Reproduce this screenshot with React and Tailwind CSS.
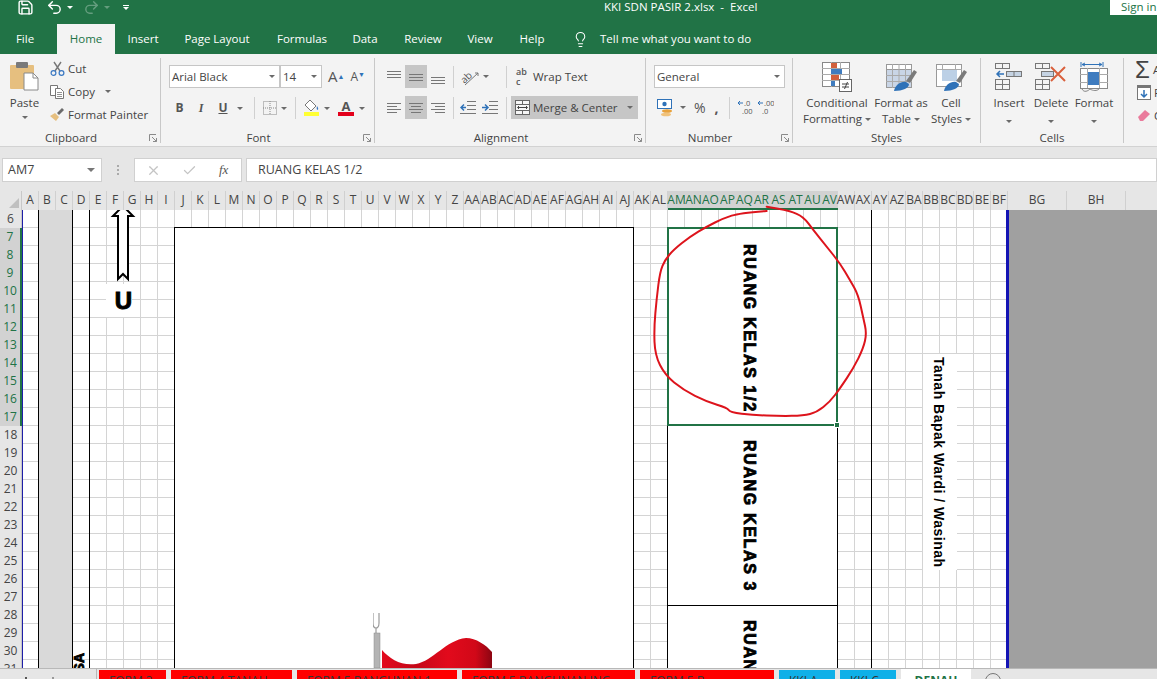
import { Save, Undo2, Redo2, Lightbulb, X, Check } from 'lucide-react';

const COLS = Array.from({ length: 58 }, (_, i) => (i < 26 ? String.fromCharCode(65 + i) : (i < 52 ? 'A' + String.fromCharCode(65 + i - 26) : 'B' + String.fromCharCode(65 + i - 52))));
const ROWS = Array.from({ length: 26 }, (_, i) => i + 6);

function Caret({ className = '' }) {
  return <span className={`inline-block w-0 h-0 border-x-[3px] border-t-[3px] border-x-transparent border-t-[#6a6a6a] ${className}`} />;
}

function VDivider({ className = '' }) {
  return <div className={`w-px h-[22px] bg-[#d0d0d0] ${className}`} />;
}

function Launcher() {
  return (
    <svg width="8" height="8" viewBox="0 0 8 8" className="absolute right-[3px] bottom-[1px]">
      <path d="M0.5 7V0.5H7M7.5 7.5L3 3M7.5 4V7.5H4" fill="none" stroke="#8a8a8a" strokeWidth="1" />
    </svg>
  );
}

function Group({ width, label, launcher, children }) {
  return (
    <div className={`relative shrink-0 h-[85px] border-r border-[#c8c8c8] flex flex-col ${width}`}>
      <div className="h-[72px] shrink-0">{children}</div>
      <div className={`text-center text-[11.5px] leading-[16px] text-[#444] ${launcher ? 'pr-[18px]' : ''}`}>{label}</div>
      {launcher && <Launcher />}
    </div>
  );
}

// align icons are just sets of grey lines
function Lines({ rows }) {
  return (
    <svg width="16" height="16" viewBox="0 0 16 16">
      {rows.map(([x1, x2, y], i) => <line key={i} x1={x1} x2={x2} y1={y + 0.5} y2={y + 0.5} stroke="#777" />)}
    </svg>
  );
}

function AlignSlot({ rows, on }) {
  return (
    <div className={`w-[22px] h-[23px] flex items-center justify-center ${on ? 'bg-[#c6c6c6]' : ''}`}>
      <Lines rows={rows} />
    </div>
  );
}

function Select({ width, text }) {
  return (
    <div className={`h-[23px] bg-white border border-[#c6c6c6] flex items-center justify-between pl-[2px] pr-[4px] text-[11.5px] text-[#444] ${width}`}>
      <span>{text}</span>
      <Caret />
    </div>
  );
}

function PasteIcon() {
  return (
    <svg width="31" height="30" viewBox="0 0 31 30">
      <rect x="1" y="4" width="24" height="24" rx="1" fill="#e6bf7f" />
      <rect x="7" y="1" width="12" height="6" rx="1" fill="#7a7a7a" />
      <path d="M15 12h9l5 5v12H15z" fill="#fff" stroke="#8a8a8a" />
      <path d="M24 12v5h5" fill="none" stroke="#8a8a8a" />
    </svg>
  );
}

function CutIcon() {
  return (
    <svg width="15" height="15" viewBox="0 0 15 15" fill="none">
      <path d="M4 1l6 9M11 1l-6 9" stroke="#777" strokeWidth="1.4" />
      <circle cx="3.5" cy="12" r="2.4" stroke="#3a78c2" strokeWidth="1.2" />
      <circle cx="11.5" cy="12" r="2.4" stroke="#3a78c2" strokeWidth="1.2" />
    </svg>
  );
}

function CopyIcon() {
  return (
    <svg width="15" height="15" viewBox="0 0 15 15" fill="#fff" stroke="#777">
      <path d="M0.5 1.5h7v10h-7z" />
      <path d="M5.5 4.5h5l3 3v7h-8z" />
      <path d="M7 8.5h5M7 10.5h5M7 12.5h5" strokeWidth="0.8" />
    </svg>
  );
}

function BrushIcon() {
  return (
    <svg width="16" height="15" viewBox="0 0 16 15">
      <path d="M1 9l5-3 4 4-3 4c-2-2-4-3-6-5z" fill="#e6bf7f" />
      <path d="M8 6l5-5 2 2-5 5z" fill="#6b6b6b" />
    </svg>
  );
}

function FillIcon() {
  return (
    <svg width="17" height="18" viewBox="0 0 17 18">
      <path d="M7 1l6 6-5 5-6-6z" fill="#fff" stroke="#777" />
      <path d="M14 7c1 1.5 1.5 2.5 1 3.500s-2 0-1-3.500z" fill="#3a78c2" />
      <rect x="1" y="13" width="15" height="4" fill="#ffff33" />
    </svg>
  );
}

function BorderIcon() {
  return (
    <svg width="14" height="14" viewBox="0 0 14 14" fill="none" stroke="#888" strokeDasharray="1 1">
      <rect x="0.5" y="0.5" width="13" height="13" />
      <path d="M7 0v14M0 7h14" />
    </svg>
  );
}

function OrientIcon() {
  return (
    <svg width="20" height="18" viewBox="0 0 20 18">
      <text x="0" y="13" fontSize="10" fill="#555" fontFamily="Open Sans, sans-serif" transform="rotate(-45 6 9)">ab</text>
      <path d="M5 17L18 5M15 5h3v3" fill="none" stroke="#777" />
    </svg>
  );
}

function IndentIcon({ flip }) {
  return (
    <svg width="16" height="13" viewBox="0 0 16 13">
      <path d="M7 .5h9M7 4.500h9M7 8.500h9M0 12.500h16" stroke="#777" fill="none" />
      <path d={flip ? 'M0 6.500h5M3 3.500l3 3-3 3' : 'M6 6.500H1M4 3.500l-3 3 3 3'} stroke="#2f72b8" strokeWidth="1.5" fill="none" />
    </svg>
  );
}

function MergeIcon() {
  return (
    <svg width="15" height="15" viewBox="0 0 15 15" fill="#f6f6f6" stroke="#666">
      <rect x="0.5" y="0.5" width="14" height="14" />
      <path d="M0 4.500h15M0 10.500h15M7.500 0v4M7.500 11v4" />
      <path d="M3 7.500h9M4 6L2.500 7.500 4 9M11 6l1.500 1.500L11 9" stroke="#444" fill="none" />
    </svg>
  );
}

function CurrencyIcon() {
  return (
    <svg width="17" height="18" viewBox="0 0 17 18">
      <rect x="0.5" y="0.5" width="14" height="9" fill="#fff" stroke="#2f72b8" />
      <circle cx="7.500" cy="5" r="2.200" fill="#2f72b8" />
      <ellipse cx="10" cy="12" rx="5" ry="1.800" fill="#e8a23c" />
      <ellipse cx="9" cy="15.500" rx="5" ry="1.800" fill="#f1c27a" />
    </svg>
  );
}

function DecimalIcon({ inc }) {
  return (
    <svg width="17" height="17" viewBox="0 0 17 17" fontFamily="Open Sans, sans-serif" fontSize="7.500" fill="#555">
      <text x="7" y="7">{inc ? '.0' : '.00'}</text>
      <text x="5" y="15">{inc ? '.00' : '.0'}</text>
      <path d="M6 4H1M3 2L1 4l2 2" fill="none" stroke="#2f72b8" />
    </svg>
  );
}

function CondIcon() {
  return (
    <svg width="30" height="30" viewBox="0 0 30 30">
      <rect x="0.5" y="0.5" width="27" height="24" fill="#fff" stroke="#888" />
      <path d="M9.500 0v25M18.500 0v25M0 6.500h28M0 12.500h28M0 18.500h28" stroke="#aaa" />
      <rect x="9" y="1" width="6" height="5" fill="#d2603c" />
      <rect x="9" y="7" width="11" height="5" fill="#3f7cbf" />
      <rect x="9" y="13" width="8" height="5" fill="#d2603c" />
      <rect x="9" y="19" width="4" height="5" fill="#3f7cbf" />
      <rect x="17.500" y="17.500" width="12" height="12" fill="#fff" stroke="#666" />
      <path d="M20 22h7M20 25h7M25.500 20l-3 7" stroke="#444" fill="none" />
    </svg>
  );
}

function TableIcon() {
  return (
    <svg width="31" height="30" viewBox="0 0 31 30">
      <rect x="0.5" y="2.500" width="25" height="23" fill="#c9d5e6" stroke="#999" />
      <rect x="0.500" y="2.500" width="25" height="5" fill="#fff" stroke="#999" />
      <path d="M6.500 2v24M13 2v24M19.500 2v24M0 13.500h26M0 19.500h26" stroke="#aaa" />
      <path d="M20 19L28 8l3 2-7 11z" fill="#7a7a7a" />
      <path d="M8 29c1-6 7-10 12-9l3 2c0 4-6 7-15 7z" fill="#2f72b8" />
    </svg>
  );
}

function CellStyleIcon() {
  return (
    <svg width="31" height="30" viewBox="0 0 31 30">
      <rect x="0.5" y="2.500" width="25" height="22" fill="#fff" stroke="#999" />
      <rect x="6" y="8" width="15" height="11" fill="#bcd0e6" />
      <path d="M6.500 2v6M19.500 2v6M0 7.500h26" stroke="#aaa" />
      <path d="M20 19L28 8l3 2-7 11z" fill="#7a7a7a" />
      <path d="M8 29c1-6 7-10 12-9l3 2c0 4-6 7-15 7z" fill="#2f72b8" />
    </svg>
  );
}

function InsertIcon() {
  return (
    <svg width="28" height="28" viewBox="0 0 28 28" fill="none" stroke="#777">
      <rect x="0.500" y="1.500" width="14" height="5" />
      <path d="M7.500 1v5" />
      <rect x="0.500" y="17.500" width="14" height="10" />
      <path d="M7.500 17v10M0 22.500h14" />
      <rect x="11.500" y="9.500" width="15" height="5" fill="#c5d3e3" />
      <path d="M19 9v6" />
      <path d="M9 12H2M5 9l-3 3 3 3" stroke="#2f72b8" strokeWidth="1.500" />
    </svg>
  );
}

function DeleteIcon() {
  return (
    <svg width="32" height="28" viewBox="0 0 32 28" fill="none" stroke="#777">
      <rect x="0.500" y="1.500" width="14" height="5" />
      <path d="M7.500 1v5" />
      <rect x="0.500" y="17.500" width="14" height="10" />
      <path d="M7.500 17v10M0 22.500h14" />
      <rect x="6.500" y="9.500" width="12" height="5" fill="#c5d3e3" />
      <path d="M16 5l14 14M30 5L16 19" stroke="#d9603c" strokeWidth="2" />
    </svg>
  );
}

function FormatIcon() {
  return (
    <svg width="28" height="31" viewBox="0 0 28 31" fill="none" stroke="#888">
      <path d="M1 0v5M23 0v5M2 2.500h20M5 1L2 2.500 5 4M19 1l3 1.500L19 4" stroke="#2f72b8" />
      <rect x="0.500" y="6.500" width="27" height="20" fill="#fff" />
      <path d="M7.500 6v20M19.500 6v20M0 12.500h28M0 20.500h28" stroke="#aaa" />
      <rect x="8" y="10" width="11" height="13" fill="#3f7cbf" stroke="none" />
      <path d="M2 27c2 4 6 2 8 0 3 2 7 2 9 0" />
    </svg>
  );
}

function LargeButton({ width, icon, lines }) {
  return (
    <div className={`shrink-0 flex flex-col items-center ${width}`}>
      <div className="h-[33px] mt-[4px] flex items-start justify-center">{icon}</div>
      <div className="text-[11.5px] leading-[16px] text-[#444] text-center whitespace-nowrap">
        {lines.map((l, i) => <div key={i}>{l}</div>)}
      </div>
    </div>
  );
}

function Ribbon() {
  return (
    <div className="h-[93px] shrink-0 bg-[#f3f3f3] border-b border-[#d2d2d2] pt-[4px] flex overflow-hidden">
      <Group width="w-[161px]" label="Clipboard" launcher>
        <div className="flex">
          <div className="w-[49px] flex flex-col items-center">
            <div className="mt-[3px] h-[34px]"><PasteIcon /></div>
            <span className="text-[11.5px] leading-[16px] text-[#444]">Paste</span>
            <Caret className="mt-[5px]" />
          </div>
          <div className="flex flex-col -mt-px text-[11.5px] text-[#444]">
            {[[<CutIcon />, 'Cut'], [<CopyIcon />, 'Copy'], [<BrushIcon />, 'Format Painter']].map(([icon, t], i) => (
              <div key={t} className="h-[23px] flex items-center gap-[3px] whitespace-nowrap">
                <span className="w-[16px] flex justify-center">{icon}</span>
                {t}
                {i === 1 && <Caret className="ml-[7px]" />}
              </div>
            ))}
          </div>
        </div>
      </Group>

      <Group width="w-[214px]" label="Font" launcher>
        <div className="pl-[8px] pt-[7px]">
          <div className="flex items-center">
            <Select width="w-[111px]" text="Arial Black" />
            <Select width="w-[42px]" text="14" />
            <span className="ml-[6px] text-[15px] leading-none text-[#555]">A<sup className="text-[7px] text-[#2f72b8]">▲</sup></span>
            <span className="ml-[6px] text-[12px] leading-none text-[#555]">A<sup className="text-[7px] text-[#2f72b8]">▼</sup></span>
          </div>
          <div className="flex items-center h-[20px] mt-[10px] text-[12px] text-[#555]">
            <span className="w-[21px] text-center font-bold">B</span>
            <span className="w-[22px] text-center italic font-['Liberation_Serif',serif] font-bold">I</span>
            <span className="w-[22px] text-center font-bold underline">U</span>
            <Caret className="ml-[3px]" />
            <VDivider className="ml-[11px]" />
            <span className="ml-[7px] w-[16px] flex justify-center"><BorderIcon /></span>
            <Caret className="ml-[3px]" />
            <VDivider className="ml-[8px]" />
            <span className="ml-[6px] w-[18px] flex justify-center"><FillIcon /></span>
            <Caret className="ml-[4px]" />
            <span className="ml-[7px] w-[18px] flex flex-col items-center font-bold leading-[12px] text-[13px]">
              A
              <span className="block w-[16px] h-[4px] bg-[#e3001b]" />
            </span>
            <Caret className="ml-[4px]" />
          </div>
        </div>
      </Group>

      <Group width="w-[271px]" label="Alignment" launcher>
        <div className="pl-[8px] pt-[7px]">
          <div className="flex items-center">
            <AlignSlot rows={[[1, 15, 2], [1, 15, 5], [1, 15, 8]]} />
            <AlignSlot on rows={[[1, 15, 5], [1, 15, 8], [1, 15, 11]]} />
            <AlignSlot rows={[[1, 15, 8], [1, 15, 11], [1, 15, 14]]} />
            <VDivider className="ml-[4px]" />
            <div className="ml-[6px] w-[46px] flex items-center gap-[3px]"><OrientIcon /><Caret /></div>
            <VDivider />
            <div className="ml-[4px] w-[127px] h-[23px] flex items-center text-[11.5px] text-[#444]">
              <span className="w-[22px] pl-[5px] leading-[10px] text-[9px] font-semibold text-[#555]">ab<br />c</span>
              Wrap Text
            </div>
          </div>
          <div className="flex items-center mt-[8px]">
            <AlignSlot rows={[[1, 15, 3], [1, 11, 6], [1, 15, 9], [1, 11, 12]]} />
            <AlignSlot on rows={[[1, 15, 3], [3, 13, 6], [1, 15, 9], [3, 13, 12]]} />
            <AlignSlot rows={[[1, 15, 3], [5, 15, 6], [1, 15, 9], [5, 15, 12]]} />
            <VDivider className="ml-[4px]" />
            <div className="ml-[6px] w-[46px] flex items-center gap-[6px]"><IndentIcon /><IndentIcon flip /></div>
            <VDivider />
            <div className="ml-[4px] w-[127px] h-[23px] bg-[#c6c6c6] flex items-center text-[11.5px] text-[#444] pl-[4px]">
              <MergeIcon />
              <span className="ml-[3px]">Merge &amp; Center</span>
              <Caret className="ml-auto mr-[5px]" />
            </div>
          </div>
        </div>
      </Group>

      <Group width="w-[147px]" label="Number" launcher>
        <div className="pl-[8px] pt-[7px]">
          <Select width="w-[131px]" text="General" />
          <div className="flex items-center h-[23px] mt-[8px] pl-[3px] text-[#555]">
            <CurrencyIcon />
            <Caret className="ml-[6px]" />
            <span className="ml-[8px] text-[14px]">%</span>
            <span className="ml-[9px] text-[14px] font-bold leading-none">,</span>
            <VDivider className="ml-[10px]" />
            <span className="ml-[7px]"><DecimalIcon inc /></span>
            <span className="ml-[3px]"><DecimalIcon /></span>
          </div>
        </div>
      </Group>

      <Group width="w-[188px]" label="Styles">
        <div className="flex pl-[11px]">
          <LargeButton width="w-[66px]" icon={<CondIcon />} lines={['Conditional', <>Formatting <Caret className="mb-[2px]" /></>]} />
          <LargeButton width="w-[62px]" icon={<TableIcon />} lines={['Format as', <>Table <Caret className="mb-[2px]" /></>]} />
          <LargeButton width="w-[38px]" icon={<CellStyleIcon />} lines={['Cell', <>Styles <Caret className="mb-[2px]" /></>]} />
        </div>
      </Group>

      <Group width="w-[143px]" label="Cells">
        <div className="flex pl-[6px]">
          <LargeButton width="w-[44px]" icon={<InsertIcon />} lines={['Insert', <Caret />]} />
          <LargeButton width="w-[40px]" icon={<DeleteIcon />} lines={['Delete', <Caret />]} />
          <LargeButton width="w-[46px]" icon={<FormatIcon />} lines={['Format', <Caret />]} />
        </div>
      </Group>

      {/* Editing group runs off the right edge */}
      <div className="pl-[11px] flex flex-col text-[11.5px] text-[#444] whitespace-nowrap">
        <div className="h-[23px] flex items-center gap-[2px]"><span className="text-[24px] leading-none w-[16px] font-['Liberation_Sans',sans-serif]">Σ</span>AutoSum</div>
        <div className="h-[23px] flex items-center gap-[3px] pl-[2px]">
          <svg width="14" height="15" viewBox="0 0 14 15"><rect x="0.500" y="0.500" width="13" height="14" fill="#fff" stroke="#777" /><rect x="0" y="0" width="14" height="3" fill="#777" /><path d="M7 5v7M4 9l3 3 3-3" fill="none" stroke="#2f72b8" strokeWidth="1.500" /></svg>
          Fill
        </div>
        <div className="h-[23px] flex items-center gap-[3px] pl-[2px]">
          <svg width="14" height="13" viewBox="0 0 14 13"><path d="M1 8l7-7 5 4-7 7H3z" fill="#ea7b9c" /></svg>
          Clear
        </div>
      </div>
    </div>
  );
}

function FormulaBar() {
  return (
    <div className="h-[44px] shrink-0 bg-[#e6e6e6] pt-[11px] pl-[2px] flex items-start">
      <div className="w-[100px] h-[24px] bg-white border border-[#d0d0d0] flex items-center justify-between pl-[5px] pr-[6px] text-[12.5px] text-[#444]">
        AM7
        <span className="w-0 h-0 border-x-[4px] border-t-[4px] border-x-transparent border-t-[#777]" />
      </div>
      <div className="w-[32px] h-[24px] flex flex-col items-center justify-center gap-[2px]">
        <span className="w-[2px] h-[2px] bg-[#aaa]" />
        <span className="w-[2px] h-[2px] bg-[#aaa]" />
        <span className="w-[2px] h-[2px] bg-[#aaa]" />
      </div>
      <div className="w-[108px] h-[24px] bg-white border border-[#d0d0d0] flex items-center pl-[11px] text-[#c4c4c4]">
        <X size={15} />
        <Check size={15} className="ml-[21px]" />
        <span className="ml-[22px] text-[13px] italic text-[#555] font-['Liberation_Serif',serif]">fx</span>
      </div>
      <div className="flex-1 ml-[4px] h-[24px] bg-white border border-[#d0d0d0] flex items-center pl-[11px] text-[12.5px] text-[#444]">
        RUANG KELAS 1/2
      </div>
    </div>
  );
}

function ColumnHeader() {
  return (
    <div className="h-[19px] shrink-0 bg-[#e6e6e6] flex text-[12px] text-[#444]">
      <div className="w-[22px] shrink-0 relative border-r border-[#c8c8c8]">
        <span className="absolute right-[2px] bottom-[2px] w-0 h-0 border-l-[10px] border-b-[10px] border-l-transparent border-b-[#c0c0c0]" />
      </div>
      {COLS.map((c, i) => {
        const on = i >= 38 && i <= 47;
        return (
          <div key={c} className={`w-[17px] shrink-0 flex justify-center whitespace-nowrap leading-[18px] ${on ? 'bg-[#d2d2d2] text-[#217346] border-b-2 border-[#217346]' : 'border-r border-[#d0d0d0]'}`}>
            {c}
          </div>
        );
      })}
      <div className="w-[59px] shrink-0 text-center leading-[18px] border-r border-[#d0d0d0]">BG</div>
      <div className="w-[59px] shrink-0 text-center leading-[18px] border-r border-[#d0d0d0]">BH</div>
      <div className="flex-1" />
    </div>
  );
}

function RowHeader() {
  return (
    <div className="w-[22px] shrink-0 bg-[#e6e6e6] flex flex-col text-[12px]">
      {ROWS.map((r) => {
        const on = r >= 7 && r <= 17;
        return (
          <div key={r} className={`h-[18px] shrink-0 text-center leading-[18px] ${on ? 'bg-[#d2d2d2] text-[#217346] border-r-2 border-[#217346]' : 'text-[#444] border-r border-[#c8c8c8]'}`}>
            {r}
          </div>
        );
      })}
    </div>
  );
}

function Flag() {
  return (
    <svg width="125" height="56" viewBox="0 0 125 56" className="absolute left-[198px] top-[384px]">
      <defs>
        <linearGradient id="flagRed" x1="0" x2="1">
          <stop offset="0" stopColor="#e30a1d" />
          <stop offset="0.3" stopColor="#c40818" />
          <stop offset="0.6" stopColor="#e20a1c" />
          <stop offset="0.85" stopColor="#d10818" />
          <stop offset="1" stopColor="#8c0512" />
        </linearGradient>
      </defs>
      <path d="M0 1v10c0 4 2 5 3 5s3-1 3-5V1M3 16v6" fill="none" stroke="#9a9a9a" strokeWidth="1.200" />
      <rect x="1" y="21" width="6" height="35" fill="#b4b4b4" stroke="#8a8a8a" strokeWidth="0.500" />
      <path d="M9 38c8 9 19 16 34 14 17-3 30-24 50-26 10 0 20 7 26 14v16H9z" fill="url(#flagRed)" />
    </svg>
  );
}

const RED_LINE = [[380, 18], [300, 24], [250, 40], [200, 65], [150, 95], [100, 135], [75, 165], [60, 200], [50, 280], [42, 370], [45, 450], [75, 510], [130, 555], [200, 590], [262, 608], [270, 622], [340, 630], [420, 633], [490, 632], [530, 622], [570, 590], [600, 550], [640, 490], [670, 430], [680, 385], [670, 340], [655, 270], [630, 225], [600, 175], [560, 125], [520, 75], [490, 35], [450, 18], [380, 5]];

function smoothPath(pts) {
  let d = `M${pts[0][0]} ${pts[0][1]}`;
  for (let i = 1; i < pts.length - 1; i++) {
    const mx = (pts[i][0] + pts[i + 1][0]) / 2;
    const my = (pts[i][1] + pts[i + 1][1]) / 2;
    d += ` Q${pts[i][0]} ${pts[i][1]} ${mx} ${my}`;
  }
  const last = pts[pts.length - 1];
  return `${d} L${last[0]} ${last[1]}`;
}

const bigText = "font-['Liberation_Sans',sans-serif] font-bold [writing-mode:vertical-rl] whitespace-nowrap text-black [-webkit-text-stroke:0.8px_black]";

function Sheet() {
  return (
    <div className="flex-1 min-h-0 flex overflow-hidden">
      <RowHeader />
      <div className="relative w-[986px] shrink-0 overflow-hidden bg-white grid grid-cols-[repeat(58,17px)] grid-rows-[repeat(26,18px)] bg-[linear-gradient(transparent_17px,#d4d4d4_17px),linear-gradient(90deg,transparent_16px,#d4d4d4_16px)] bg-[size:17px_18px]">
        <div className="col-[1/2] row-[1/27] border-l border-[#1f1fa8]" />
        <div className="col-[2/4] row-[1/27] -ml-px bg-[#d9d9d9] border-x border-black" />
        <div className="col-[4/5] row-[1/27] border-r border-black" />
        <div className={`col-[4/5] row-[25/27] pt-[11px] pr-[4px] text-[14px] leading-[13px] ${bigText}`}>
          <span className="block w-max h-max rotate-180">DESA</span>
        </div>

        {/* north arrow */}
        <div className="col-[6/8] row-[1/5] relative">
          <svg width="34" height="72" viewBox="0 0 34 72" fill="#fff" stroke="#000" strokeWidth="2" className="absolute left-0 top-0 overflow-visible">
            <path d="M16 -4L26 6H21V69L16 64L11 69V6H6Z" />
          </svg>
        </div>
        <div className="col-[6/8] row-[5/7] bg-white mt-[2px] mb-[1px] mr-[9px] flex items-center justify-end text-[24px] leading-none font-bold -ml-[1px] font-['Liberation_Sans',sans-serif] [-webkit-text-stroke:1px_black]">
          U
        </div>

        <div className="col-[10/37] row-[2/27] -ml-px -mt-px bg-white border border-b-0 border-black relative">
          <Flag />
        </div>

        <div className="col-[39/49] row-[2/13] -ml-px bg-white flex justify-center pt-[16px] pr-[8px]">
          <span className={`text-[16px] leading-[18px] tracking-[1.65px] ${bigText}`}>RUANG KELAS 1/2</span>
        </div>
        <div className="col-[39/49] row-[13/23] -ml-px bg-white border-x border-b border-black flex justify-center pt-[14px] pr-[8px]">
          <span className={`text-[16px] leading-[18px] tracking-[1.65px] ${bigText}`}>RUANG KELAS 3</span>
        </div>
        <div className="col-[39/49] row-[23/27] -ml-px bg-white border-x border-black flex justify-center pt-[14px] pr-[8px]">
          <span className={`text-[16px] leading-[18px] tracking-[1.65px] ${bigText}`}>RUANG</span>
        </div>
        {/* selection box with fill handle */}
        <div className="col-[39/49] row-[2/13] -ml-px -mt-px border-2 border-[#217346] relative">
          <span className="absolute -right-[4px] -bottom-[4px] w-[6px] h-[6px] bg-[#217346] border border-white" />
        </div>

        <div className="col-[50/51] row-[1/27] border-r border-black" />

        <div className="col-[54/56] row-[9/21] bg-white flex justify-center items-center pr-[3px]">
          <span className="font-['Liberation_Sans',sans-serif] font-bold [writing-mode:vertical-rl] whitespace-nowrap text-[14px] leading-[16px] tracking-[0.5px] text-black">Tanah Bapak Wardi / Wasinah</span>
        </div>
      </div>
      <div className="flex-1 bg-[#a0a0a0] border-l-[3px] border-[#1414b4] -ml-[2px] z-10" />
    </div>
  );
}

const TABS = [
  ['FORM 3', 'w-[67px]', 'bg-[#ff0000]'],
  ['FORM 4 TANAH', 'w-[121px]', 'bg-[#ff0000]'],
  ['FORM 5 BANGUNAN 1', 'w-[160px]', 'bg-[#ff0000]'],
  ['FORM 5 BANGUNAN ING', 'w-[173px]', 'bg-[#ff0000]'],
  ['FORM 5 B', 'w-[134px]', 'bg-[#ff0000]'],
  ['KKI A', 'w-[56px]', 'bg-[#0fb0e8]'],
  ['KKI C', 'w-[56px]', 'bg-[#0fb0e8]'],
];

function SheetTabs() {
  return (
    <div className="h-[11px] shrink-0 bg-[#e6e6e6] border-t border-[#b8b8b8] flex overflow-hidden text-[12px] text-[#333]">
      <div className="w-[97px] shrink-0 border-r border-[#b8b8b8] flex pt-[8px] pl-[25px] gap-[25px]">
        <span className="w-[2px] h-[2px] bg-[#555]" />
        <span className="w-[2px] h-[2px] bg-[#999]" />
      </div>
      <div className="flex pl-[2px] gap-[5px]">
        {TABS.map(([t, w, bg]) => (
          <div key={t} className={`shrink-0 h-[11px] mt-[1px] pt-[3px] pl-[10px] whitespace-nowrap overflow-hidden leading-[16px] ${w} ${bg}`}>{t}</div>
        ))}
        <div className="shrink-0 w-[70px] -mt-px h-[12px] bg-white text-center text-[#217346] font-bold leading-[16px] pt-[5px]">DENAH</div>
      </div>
      <span className="ml-[14px] mt-[4px] w-[16px] h-[16px] rounded-full border border-[#777] shrink-0" />
    </div>
  );
}

export default function App() {
  return (
    <div className="relative w-[1157px] h-[679px] overflow-hidden flex flex-col bg-white font-['Open_Sans',sans-serif]">
      <div className="h-[24px] shrink-0 bg-[#217346] flex items-start text-white text-[11.5px]">
        <div className="w-[604px] shrink-0 flex items-center h-[14px] pl-[17px]">
          <Save size={17} strokeWidth={2} />
          <Undo2 size={17} strokeWidth={2} className="ml-[12px]" />
          <span className="ml-[4px] w-0 h-0 border-x-[3px] border-t-[3px] border-x-transparent border-t-white" />
          <Redo2 size={17} strokeWidth={2} className="ml-[10px] opacity-30" />
          <span className="ml-[4px] w-0 h-0 border-x-[3px] border-t-[3px] border-x-transparent border-t-white opacity-30" />
          <span className="ml-[13px] flex flex-col items-center gap-[1px]">
            <span className="w-[6px] h-px bg-white" />
            <span className="w-0 h-0 border-x-[3px] border-t-[3px] border-x-transparent border-t-white" />
          </span>
        </div>
        <span className="leading-[13px]">KKI SDN PASIR 2.xlsx&nbsp; -&nbsp; Excel</span>
        <div className="ml-auto w-[47px] h-[15px] bg-white text-[#217346] pl-[11px] leading-[13px] whitespace-nowrap">Sign in</div>
      </div>

      <div className="h-[30px] shrink-0 bg-[#217346] flex items-center text-white text-[11.5px]">
        <div className="w-[50px] text-center">File</div>
        <div className="ml-[7px] w-[58px] h-full bg-[#f3f3f3] text-[#217346] flex items-center justify-center">Home</div>
        <div className="w-[56px] text-center">Insert</div>
        <div className="w-[92px] text-center">Page Layout</div>
        <div className="w-[78px] text-center">Formulas</div>
        <div className="w-[48px] text-center">Data</div>
        <div className="w-[68px] text-center">Review</div>
        <div className="w-[46px] text-center">View</div>
        <div className="w-[58px] text-center">Help</div>
        <Lightbulb size={17} strokeWidth={1.5} className="ml-[11px]" />
        <span className="ml-[11px]">Tell me what you want to do</span>
      </div>

      <Ribbon />
      <FormulaBar />
      <ColumnHeader />
      <Sheet />
      <SheetTabs />

      {/* hand drawn red circle on top of the sheet */}
      <svg width="240" height="225" viewBox="0 0 720 675" fill="none" className="absolute left-[640px] top-[205px] pointer-events-none">
        <path d={smoothPath(RED_LINE)} stroke="#dd141c" strokeWidth="6" strokeLinecap="round" strokeLinejoin="round" />
      </svg>
    </div>
  );
}
